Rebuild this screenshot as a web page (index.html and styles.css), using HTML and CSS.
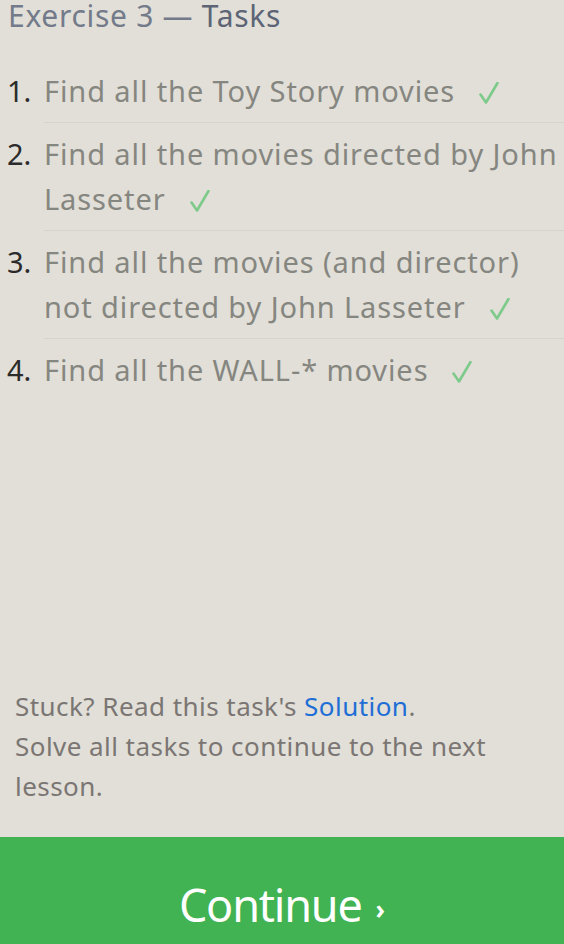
FILE: index.html
```html
<!DOCTYPE html>
<html lang="en">
<head>
<meta charset="utf-8">
<title>Exercise 3 — Tasks</title>
<link rel="stylesheet" href="styles.css">
</head>
<body>
<div class="page">
  <h1 class="title"><span class="title-light">Exercise 3 —</span> <span class="title-dark">Tasks</span></h1>
  <ol class="tasks">
    <li class="task"><span class="num">1.</span><span class="text">Find all the Toy Story movies<svg class="check" viewBox="0 0 20 22" width="20" height="22"><path d="M1.5 12.5 L7 20.5 L18.5 1" fill="none" stroke="currentColor" stroke-width="2.6" stroke-linecap="round" stroke-linejoin="round"/></svg></span></li>
    <li class="task"><span class="num">2.</span><span class="text">Find all the movies directed by John Lasseter<svg class="check" viewBox="0 0 20 22" width="20" height="22"><path d="M1.5 12.5 L7 20.5 L18.5 1" fill="none" stroke="currentColor" stroke-width="2.6" stroke-linecap="round" stroke-linejoin="round"/></svg></span></li>
    <li class="task"><span class="num">3.</span><span class="text">Find all the movies (and director) not directed by John Lasseter<svg class="check" viewBox="0 0 20 22" width="20" height="22"><path d="M1.5 12.5 L7 20.5 L18.5 1" fill="none" stroke="currentColor" stroke-width="2.6" stroke-linecap="round" stroke-linejoin="round"/></svg></span></li>
    <li class="task last"><span class="num">4.</span><span class="text">Find all the WALL-* movies<svg class="check" viewBox="0 0 20 22" width="20" height="22"><path d="M1.5 12.5 L7 20.5 L18.5 1" fill="none" stroke="currentColor" stroke-width="2.6" stroke-linecap="round" stroke-linejoin="round"/></svg></span></li>
  </ol>
  <div class="spacer"></div>
  <p class="note">Stuck? Read this task's <a class="link" href="#">Solution</a>.<br>Solve all tasks to continue to the next lesson.</p>
  <div class="continue">Continue<span class="chev">›</span></div>
</div>
</body>
</html>
```

FILE: styles.css
```css
html, body {
  margin: 0;
  padding: 0;
  background: #e1dfd8;
}
body {
  font-family: "Noto Sans", Lato, sans-serif;
}
.page {
  height: 944px;
  display: flex;
  flex-direction: column;
  overflow: hidden;
}
.title {
  margin: 0;
  padding: 0 8px;
  font-size: 30px;
  font-weight: 400;
  line-height: 32px;
  letter-spacing: 0.7px;
}
.title-light { color: #737a8a; }
.title-dark { color: #5d6475; }
.tasks {
  list-style: none;
  margin: 27.5px 0 0;
  padding: 0;
}
.task {
  display: flex;
  font-size: 29px;
  line-height: 45px;
  letter-spacing: 0.9px;
}
.num {
  width: 44px;
  flex: none;
  padding-left: 7px;
  box-sizing: border-box;
  letter-spacing: 0;
  color: #2b2b2b;
}
.text {
  flex: 1;
  color: #868680;
  padding: 8px 0 9px;
  border-bottom: 1px solid #d5d3ca;
}
.task .num { padding-top: 8px; }
.task.last .text { border-bottom: none; }
.check {
  color: #7dca8b;
  margin-left: 24px;
  vertical-align: -2px;
}
.spacer { flex: 1; }
.note {
  margin: 0 0 31px;
  padding: 0 15px;
  font-size: 26px;
  line-height: 40px;
  letter-spacing: 0.45px;
  color: #7b7673;
}
.link {
  color: #1f6ed6;
  text-decoration: none;
}
.continue {
  flex: none;
  height: 107px;
  box-sizing: border-box;
  padding-top: 40px;
  background: #41b352;
  color: #ffffff;
  text-align: center;
  font-size: 45px;
  line-height: 56px;
  letter-spacing: -1.2px;
}
.chev {
  display: inline-block;
  margin-left: 14px;
  font-size: 26px;
  font-weight: 700;
  letter-spacing: 0;
  vertical-align: 3px;
}
```
